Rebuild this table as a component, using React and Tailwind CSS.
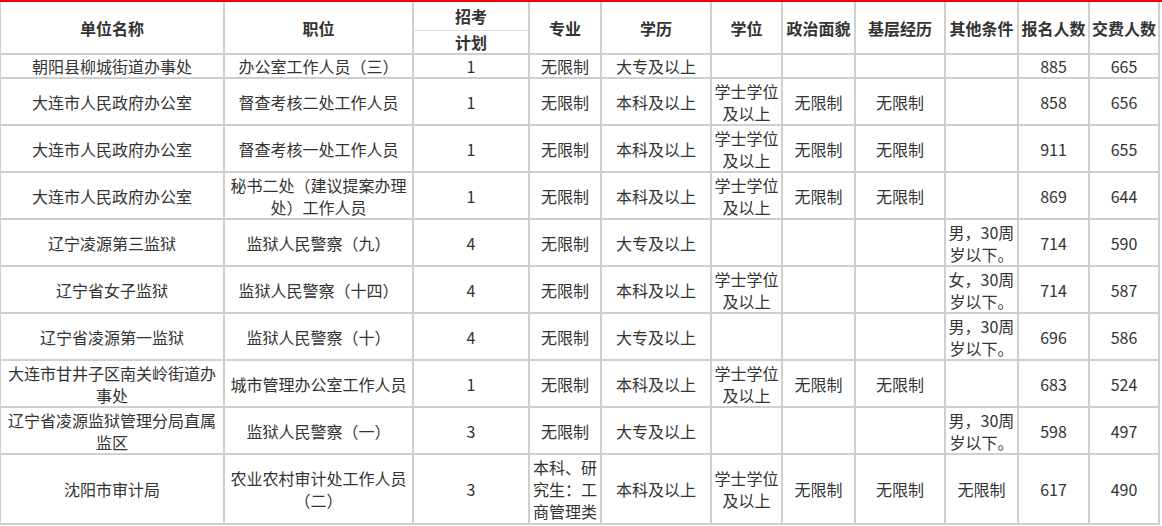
import React from "react";

const widths = [224, 189, 116, 72, 110, 71, 73, 90, 73, 71, 70];

const rows = [
  ["朝阳县柳城街道办事处", "办公室工作人员（三）", "1", "无限制", "大专及以上", "", "", "", "", "885", "665"],
  ["大连市人民政府办公室", "督查考核二处工作人员", "1", "无限制", "本科及以上", "学士学位及以上", "无限制", "无限制", "", "858", "656"],
  ["大连市人民政府办公室", "督查考核一处工作人员", "1", "无限制", "本科及以上", "学士学位及以上", "无限制", "无限制", "", "911", "655"],
  ["大连市人民政府办公室", "秘书二处（建议提案办理处）工作人员", "1", "无限制", "本科及以上", "学士学位及以上", "无限制", "无限制", "", "869", "644"],
  ["辽宁凌源第三监狱", "监狱人民警察（九）", "4", "无限制", "大专及以上", "", "", "", "男，30周岁以下。", "714", "590"],
  ["辽宁省女子监狱", "监狱人民警察（十四）", "4", "无限制", "本科及以上", "学士学位及以上", "", "", "女，30周岁以下。", "714", "587"],
  ["辽宁省凌源第一监狱", "监狱人民警察（十）", "4", "无限制", "大专及以上", "", "", "", "男，30周岁以下。", "696", "586"],
  ["大连市甘井子区南关岭街道办事处", "城市管理办公室工作人员", "1", "无限制", "本科及以上", "学士学位及以上", "无限制", "无限制", "", "683", "524"],
  ["辽宁省凌源监狱管理分局直属监区", "监狱人民警察（一）", "3", "无限制", "大专及以上", "", "", "", "男，30周岁以下。", "598", "497"],
  ["沈阳市审计局", "农业农村审计处工作人员（二）", "3", "本科、研究生：工商管理类", "本科及以上", "学士学位及以上", "无限制", "无限制", "无限制", "617", "490"],
];

const cell =
  "border-r-2 border-b-2 border-[#cfcfcf] px-[2px] py-0 text-center align-middle";

export default function App() {
  return (
    <div
      className="w-[1162px] bg-white border-t-2 border-[#e8000b] text-[16px] leading-[22px] text-[#333]"
      style={{ fontFamily: '"Noto Sans CJK SC", "Noto Sans", sans-serif' }}
    >
      <table className="w-[1160px] table-fixed border-separate border-spacing-0 border-l border-[#cfcfcf]">
        <colgroup>
          {widths.map((w, i) => (
            <col key={i} style={{ width: w }} />
          ))}
        </colgroup>
        <thead>
          <tr className="h-[53px] font-bold">
            <th className={cell}>单位名称</th>
            <th className={cell}>职位</th>
            <th className="border-r-2 border-b-2 border-[#cfcfcf] p-0 align-top">
              <div className="h-[29px] flex items-center justify-center border-b border-[#dddddd]">
                招考
              </div>
              <div className="h-[22px] flex items-center justify-center">计划</div>
            </th>
            <th className={cell}>专业</th>
            <th className={cell}>学历</th>
            <th className={cell}>学位</th>
            <th className={cell}>政治面貌</th>
            <th className={cell}>基层经历</th>
            <th className={cell}>其他条件</th>
            <th className={cell}>报名人数</th>
            <th className={cell}>交费人数</th>
          </tr>
        </thead>
        <tbody>
          {rows.map((r, i) => (
            <tr
              key={i}
              className={i === 0 ? "h-[24px]" : i === rows.length - 1 ? "h-[70px]" : "h-[47px]"}
            >
              {r.map((c, j) => (
                <td key={j} className={cell}>
                  {c}
                </td>
              ))}
            </tr>
          ))}
        </tbody>
      </table>
    </div>
  );
}
